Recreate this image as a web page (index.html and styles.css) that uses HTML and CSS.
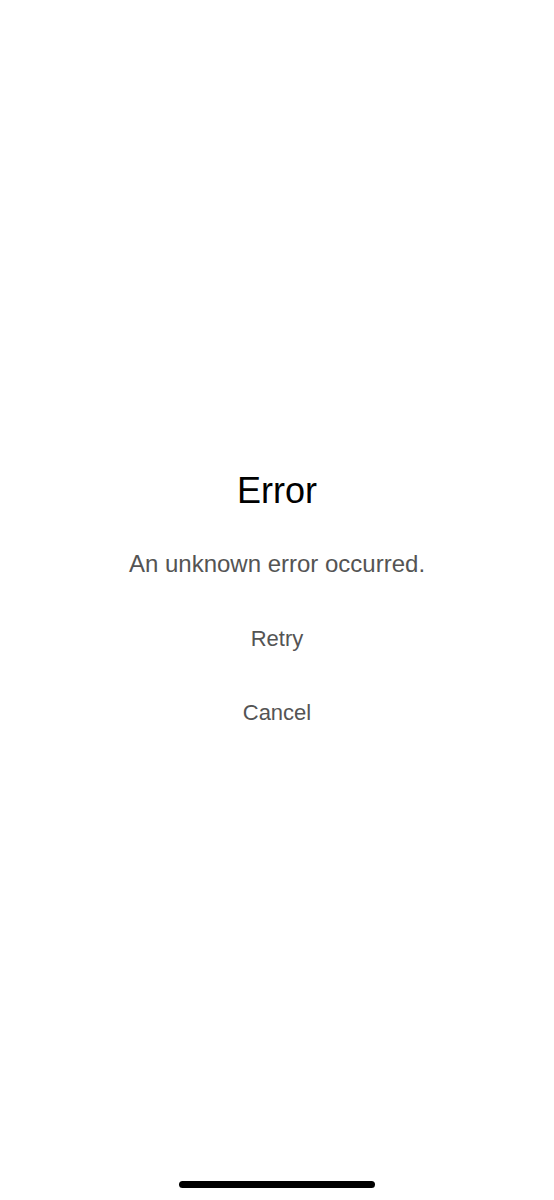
FILE: index.html
```html
<!DOCTYPE html>
<html lang="en">
<head>
<meta charset="utf-8">
<title>Error</title>
<link rel="stylesheet" href="styles.css">
</head>
<body>
<div class="screen">
  <div class="content">
    <h1 class="title">Error</h1>
    <p class="message">An unknown error occurred.</p>
    <button class="action retry">Retry</button>
    <button class="action cancel">Cancel</button>
  </div>
  <div class="home-indicator"></div>
</div>
</body>
</html>
```
FILE: styles.css
```css
html, body {
  margin: 0;
  padding: 0;
  background: #ffffff;
}
.screen {
  min-height: 1200px;
  box-sizing: border-box;
  display: flex;
  flex-direction: column;
  align-items: center;
  padding-top: 469px;
  padding-bottom: 12px;
  font-family: "Liberation Sans", Arial, sans-serif;
}
.content {
  display: flex;
  flex-direction: column;
  align-items: center;
}
.title {
  margin: 0;
  font-size: 36px;
  line-height: 44px;
  font-weight: 400;
  color: #000000;
}
.message {
  margin: 36px 0 0;
  font-size: 24px;
  line-height: 29px;
  color: #545454;
}
.action {
  margin: 0;
  padding: 0;
  border: 0;
  background: none;
  font-family: inherit;
  font-size: 22px;
  line-height: 26px;
  color: #545454;
}
.retry {
  margin-top: 48px;
}
.cancel {
  margin-top: 48px;
}
.home-indicator {
  margin-top: auto;
  width: 196px;
  height: 7px;
  border-radius: 4px;
  background: #000000;
}
```
